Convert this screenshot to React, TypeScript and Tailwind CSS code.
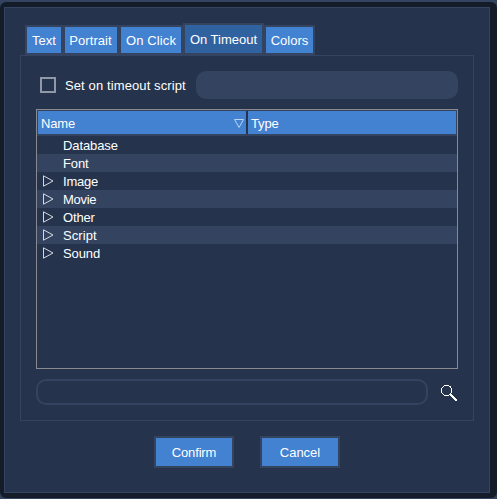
import React from "react";

const tabs = [
  { name: "Text", width: "w-[34px]" },
  { name: "Portrait", width: "w-[52px]", tracking: "tracking-[0.08px] pr-px" },
  { name: "On Click", width: "w-[60px]", tracking: "tracking-[0.14px]" },
  { name: "On Timeout", width: "w-[77px]", active: true },
  { name: "Colors", width: "w-[47px]" },
];

const rows = [
  { name: "Database", open: false, tracking: "tracking-[-0.1px]" },
  { name: "Font", open: false, tracking: "tracking-[-0.1px]" },
  { name: "Image", open: true, tracking: "tracking-[-0.2px]" },
  { name: "Movie", open: true, tracking: "tracking-[-0.3px]" },
  { name: "Other", open: true, tracking: "tracking-[-0.15px]" },
  { name: "Script", open: true, tracking: "tracking-[0.1px]" },
  { name: "Sound", open: true, tracking: "tracking-[-0.1px]" },
];

function Tabs() {
  return (
    <div className="ml-[5px] flex h-[30px] w-[290px] gap-1 bg-[#344460] px-[2px]">
      {tabs.map((t) =>
        t.active ? (
          <div key={t.name} className="-mx-[2px] -mt-[2px] h-[30px] border-2 border-b-0 border-[#344460]">
            <div className={`${t.width} flex h-[28px] items-center justify-center whitespace-nowrap bg-[#3162a0] pt-px`}>{t.name}</div>
          </div>
        ) : (
          <div key={t.name} className={`${t.width} ${t.tracking ?? ""} mt-[2px] flex h-[26px] items-center justify-center whitespace-nowrap bg-[#4381d1] pt-px`}>
            {t.name}
          </div>
        ),
      )}
    </div>
  );
}

function Tree() {
  return (
    <div className="mt-[10px] h-[260px] w-[422px] border border-[#888a90]">
      <div className="flex h-[26px] gap-[2px] border-x border-t border-b-2 border-[#344460] leading-[25px]">
        <div className="flex w-[208px] justify-between bg-[#4381d1] pl-[3px] pr-px">
          <span className="tracking-[-0.15px]">Name</span>
          <svg className="mt-[7px]" width="12" height="11" viewBox="0 0 12 11" fill="none" stroke="#b9d3f2">
            <path d="M1.5 1.5H10.5L6 9.5Z" />
          </svg>
        </div>
        <div className="flex-1 bg-[#4381d1] pl-[3px] tracking-[-0.15px]">Type</div>
      </div>
      {rows.map((r) => (
        <div key={r.name} className="flex h-[18px] items-center pl-[5px] even:bg-[#25344c] odd:bg-[#344460]">
          <span className="flex w-[21px]">
            {r.open && (
              <svg width="12" height="12" viewBox="0 0 12 12" fill="none" stroke="#d4d9e1">
                <path d="M1.5 .8V11.2L11 6Z" />
              </svg>
            )}
          </span>
          <span className={`pt-[2px] leading-[18px] ${r.tracking}`}>{r.name}</span>
        </div>
      ))}
    </div>
  );
}

export default function App() {
  return (
    <div className="h-[499px] w-[497px] overflow-hidden bg-[#344460] pb-px pt-[2px] font-['Liberation_Sans',Arial,sans-serif] text-[13px] text-white">
      <div className="h-[496px] rounded-[6px] bg-[#141c2a] pl-[4px] pt-[5px]">
        <div className="h-[486px] w-[486px] border border-[#344460] bg-[#25344c] pl-[15px] pt-[17px]">
          <Tabs />
          <div className="h-[366px] w-[454px] border border-[#344460] px-[15px] pt-[15px]">
            <div className="flex h-[28px] items-center">
              <div className="ml-[4px] h-[16px] w-[16px] border-2 border-[#8e98a6]" />
              <span className="ml-[9px] w-[131px] whitespace-nowrap pt-px tracking-[0.11px]">Set on timeout script</span>
              <div className="h-[28px] w-[262px] rounded-[10px] bg-[#344460]" />
            </div>
            <Tree />
            <div className="mt-[10px] flex h-[26px] items-center">
              <div className="h-[26px] w-[392px] rounded-[10px] border-2 border-[#344460]" />
              <svg className="ml-[13px] mt-[2px]" width="17" height="17" viewBox="0 0 17 17" shapeRendering="crispEdges" fill="none" stroke="white">
                <path d="M3 .5H8M.5 3V8M10.5 3V8M3 10.5H8M1.5 1.5V3M1 2.5H2M2 1.5H3M8 1.5H10M9.5 2V3M1 8.5H2M2 9.5H3M8 9.5H10M9.5 8V10" />
                <path d="M9.3 9.3L15.8 15.8" strokeWidth="2.8" />
              </svg>
            </div>
          </div>
          <div className="ml-[134px] mt-[15px] flex gap-[26px]">
            <button className="h-[32px] w-[80px] border-2 border-[#344460] bg-[#4381d1] pt-px tracking-[-0.15px]">Confirm</button>
            <button className="h-[32px] w-[80px] border-2 border-[#344460] bg-[#4381d1] pt-px">Cancel</button>
          </div>
        </div>
      </div>
    </div>
  );
}
